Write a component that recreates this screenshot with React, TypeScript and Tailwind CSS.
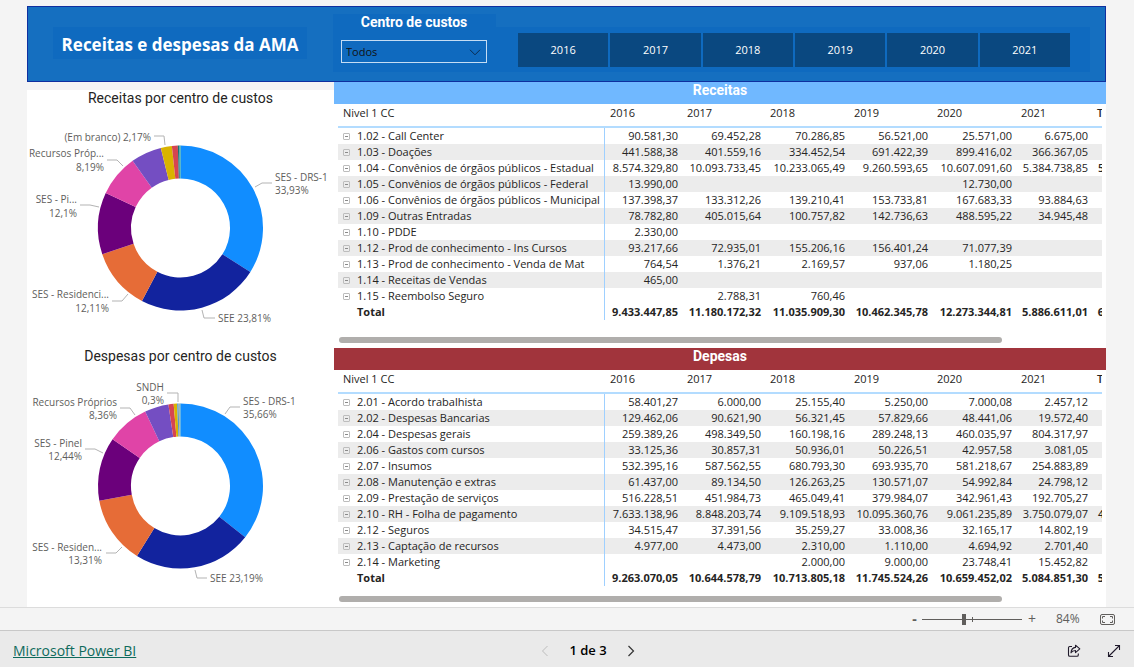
import { useState } from "react";

type Row = { name: string; values: (number | null)[] };

type Slice = { value: number; color: string };

type Callout = {
	lines: { text: string; x: number; y: number }[];
	anchor: "start" | "end";
	leader: string;
};

const years = ["2016", "2017", "2018", "2019", "2020", "2021"];

const receitas: Row[] = [
	{ name: "1.02 - Call Center", values: [90581.3, 69452.28, 70286.85, 56521, 25571, 6675] },
	{ name: "1.03 - Doações", values: [441588.38, 401559.16, 334452.54, 691422.39, 899416.02, 366367.05] },
	{
		name: "1.04 - Convênios de órgãos públicos - Estadual",
		values: [8574329.8, 10093733.45, 10233065.49, 9260593.65, 10607091.6, 5384738.85],
	},
	{
		name: "1.05 - Convênios de órgãos públicos - Federal",
		values: [13990, null, null, null, 12730, null],
	},
	{
		name: "1.06 - Convênios de órgãos públicos - Municipal",
		values: [137398.37, 133312.26, 139210.41, 153733.81, 167683.33, 93884.63],
	},
	{ name: "1.09 - Outras Entradas", values: [78782.8, 405015.64, 100757.82, 142736.63, 488595.22, 34945.48] },
	{ name: "1.10 - PDDE", values: [2330, null, null, null, null, null] },
	{
		name: "1.12 - Prod de conhecimento - Ins Cursos",
		values: [93217.66, 72935.01, 155206.16, 156401.24, 71077.39, null],
	},
	{
		name: "1.13 - Prod de conhecimento - Venda de Mat",
		values: [764.54, 1376.21, 2169.57, 937.06, 1180.25, null],
	},
	{ name: "1.14 - Receitas de Vendas", values: [465, null, null, null, null, null] },
	{ name: "1.15 - Reembolso Seguro", values: [null, 2788.31, 760.46, null, null, null] },
];

const receitasTotal = [9433447.85, 11180172.32, 11035909.3, 10462345.78, 12273344.81, 5886611.01];

const despesas: Row[] = [
	{ name: "2.01 - Acordo trabalhista", values: [58401.27, 6000, 25155.4, 5250, 7000.08, 2457.12] },
	{ name: "2.02 - Despesas Bancarias", values: [129462.06, 90621.9, 56321.45, 57829.66, 48441.06, 19572.4] },
	{ name: "2.04 - Despesas gerais", values: [259389.26, 498349.5, 160198.16, 289248.13, 460035.97, 804317.97] },
	{ name: "2.06 - Gastos com cursos", values: [33125.36, 30857.31, 50936.01, 50226.51, 42957.58, 3081.05] },
	{ name: "2.07 - Insumos", values: [532395.16, 587562.55, 680793.3, 693935.7, 581218.67, 254883.89] },
	{ name: "2.08 - Manutenção e extras", values: [61437, 89134.5, 126263.25, 130571.07, 54992.84, 24798.12] },
	{
		name: "2.09 - Prestação de serviços",
		values: [516228.51, 451984.73, 465049.41, 379984.07, 342961.43, 192705.27],
	},
	{
		name: "2.10 - RH - Folha de pagamento",
		values: [7633138.96, 8848203.74, 9109518.93, 10095360.76, 9061235.89, 3750079.07],
	},
	{ name: "2.12 - Seguros", values: [34515.47, 37391.56, 35259.27, 33008.36, 32165.17, 14802.19] },
	{ name: "2.13 - Captação de recursos", values: [4977, 4473, 2310, 1110, 4694.92, 2701.4] },
	{ name: "2.14 - Marketing", values: [null, null, 2000, 9000, 23748.41, 15452.82] },
];

const despesasTotal = [9263070.05, 10644578.79, 10713805.18, 11745524.26, 10659452.02, 5084851.3];

const receitasSlices: Slice[] = [
	{ value: 33.93, color: "#118dff" },
	{ value: 23.81, color: "#12239e" },
	{ value: 12.11, color: "#e66c37" },
	{ value: 12.1, color: "#6b007b" },
	{ value: 8.19, color: "#e044a7" },
	{ value: 6.02, color: "#744ec2" },
	{ value: 2.17, color: "#d9b300" },
	{ value: 1.15, color: "#d64550" },
	{ value: 0.3, color: "#197278" },
	{ value: 0.22, color: "#2aa69c" },
];

const receitasCallouts: Callout[] = [
	{
		anchor: "start",
		lines: [
			{ text: "SES - DRS-1", x: 248, y: 74 },
			{ text: "33,93%", x: 248, y: 87 },
		],
		leader: "M228 80L235 76H245",
	},
	{ anchor: "start", lines: [{ text: "SEE 23,81%", x: 191, y: 215 }], leader: "M175 203L177 211H188" },
	{
		anchor: "end",
		lines: [
			{ text: "SES - Residenci...", x: 82, y: 191 },
			{ text: "12,11%", x: 82, y: 205 },
		],
		leader: "M85 194H95L101 187",
	},
	{
		anchor: "end",
		lines: [
			{ text: "SES - Pi...", x: 50, y: 96 },
			{ text: "12,1%", x: 50, y: 110 },
		],
		leader: "M53 98H63L72 100",
	},
	{
		anchor: "end",
		lines: [
			{ text: "Recursos Próp...", x: 77, y: 50 },
			{ text: "8,19%", x: 77, y: 64 },
		],
		leader: "M80 53H90L96 59",
	},
	{ anchor: "end", lines: [{ text: "(Em branco) 2,17%", x: 124, y: 34 }], leader: "M127 29H137L138 38" },
];

const despesasSlices: Slice[] = [
	{ value: 35.66, color: "#118dff" },
	{ value: 23.19, color: "#12239e" },
	{ value: 13.31, color: "#e66c37" },
	{ value: 12.44, color: "#6b007b" },
	{ value: 8.36, color: "#e044a7" },
	{ value: 4.7, color: "#744ec2" },
	{ value: 1.02, color: "#d64550" },
	{ value: 0.66, color: "#d9b300" },
	{ value: 0.3, color: "#4f9bd6" },
	{ value: 0.16, color: "#d3a56d" },
	{ value: 0.2, color: "#3d9fd0" },
];

const despesasCallouts: Callout[] = [
	{
		anchor: "start",
		lines: [
			{ text: "SES - DRS-1", x: 216, y: 40 },
			{ text: "35,66%", x: 216, y: 53 },
		],
		leader: "M198 49L203 42H213",
	},
	{ anchor: "start", lines: [{ text: "SEE 23,19%", x: 183, y: 217 }], leader: "M168 205L170 213H180" },
	{
		anchor: "end",
		lines: [
			{ text: "SES - Residen...", x: 75, y: 186 },
			{ text: "13,31%", x: 75, y: 199 },
		],
		leader: "M79 188H89L95 182",
	},
	{
		anchor: "end",
		lines: [
			{ text: "SES - Pinel", x: 55, y: 82 },
			{ text: "12,44%", x: 55, y: 95 },
		],
		leader: "M58 84H68L76 88",
	},
	{
		anchor: "end",
		lines: [
			{ text: "Recursos Próprios", x: 90, y: 41 },
			{ text: "8,36%", x: 90, y: 54 },
		],
		leader: "M93 43H103L108 50",
	},
	{
		anchor: "end",
		lines: [
			{ text: "SNDH", x: 137, y: 26 },
			{ text: "0,3%", x: 137, y: 39 },
		],
		leader: "M140 28H151L151 37",
	},
];

const formatter = new Intl.NumberFormat("pt-BR", {
	minimumFractionDigits: 2,
	maximumFractionDigits: 2,
});

function format(value: number | null) {
	return value === null ? "" : formatter.format(value);
}

function sum(values: (number | null)[]) {
	return values.reduce<number>((acc, v) => acc + (v ?? 0), 0);
}

const CX = 153.5;
const CY = 121;
const OUTER = 82.5;
const INNER = 49.5;

function point(radius: number, share: number) {
	const angle = (share / 100) * 2 * Math.PI;
	return `${(CX + radius * Math.sin(angle)).toFixed(2)} ${(CY - radius * Math.cos(angle)).toFixed(2)}`;
}

function arc(from: number, to: number) {
	const large = to - from > 50 ? 1 : 0;
	return [
		`M${point(OUTER, from)}`,
		`A${OUTER} ${OUTER} 0 ${large} 1 ${point(OUTER, to)}`,
		`L${point(INNER, to)}`,
		`A${INNER} ${INNER} 0 ${large} 0 ${point(INNER, from)}Z`,
	].join("");
}

function DonutChart({ title, slices, callouts }: { title: string; slices: Slice[]; callouts: Callout[] }) {
	let start = 0;
	return (
		<section>
			<h2 className="text-center font-[Roboto,sans-serif] text-sm leading-[17px] text-[#252423]">{title}</h2>
			<svg viewBox="0 0 307 241" className="block w-full" role="img" aria-label={title}>
				{slices.map((s) => {
					const from = start;
					start += s.value;
					return <path key={s.color} d={arc(from, start)} fill={s.color} />;
				})}
				{callouts.map((c) => (
					<g key={c.leader}>
						<path d={c.leader} fill="none" stroke="#b3b3b3" />
						{c.lines.map((l) => (
							<text key={l.text} x={l.x} y={l.y} textAnchor={c.anchor} fontSize="10" fill="#605e5c">
								{l.text}
							</text>
						))}
					</g>
				))}
			</svg>
		</section>
	);
}

function CollapseIcon() {
	return (
		<svg viewBox="0 0 7 7" className="size-[7px]" fill="none" stroke="#bdbdbd" aria-hidden="true">
			<rect x="0.5" y="0.5" width="6" height="6" rx="0.5" />
			<path d="M2 3.5H5" stroke="#8a8a8a" />
		</svg>
	);
}

function Matrix({ rows, total }: { rows: Row[]; total: number[] }) {
	return (
		<div className="mx-1 overflow-x-auto [scrollbar-width:none]">
			<table className="w-[836px] table-fixed border-separate border-spacing-0 whitespace-nowrap text-[11px] leading-4 text-[#252423]">
				<colgroup>
					<col className="w-[267px]" />
					<col className="w-[77px]" />
					<col className="w-[83px]" />
					<col className="w-[84px]" />
					<col className="w-[83px]" />
					<col className="w-[84px]" />
					<col className="w-[76px]" />
					<col className="w-[82px]" />
				</colgroup>
				<thead>
					<tr className="h-6 text-left align-top">
						<th className="border-b-2 border-[#b3dcff] px-[5px] pt-px pb-[5px] font-normal">Nivel 1 CC</th>
						{years.map((y) => (
							<th key={y} className="border-b-2 border-[#b3dcff] px-[5px] pt-px pb-[5px] font-normal">
								{y}
							</th>
						))}
						<th className="border-b-2 border-[#b3dcff] px-[5px] pt-px pb-[5px] font-semibold">Total</th>
					</tr>
				</thead>
				<tbody>
					{rows.map((row) => (
						<tr key={row.name} className="h-4 text-right even:bg-[#ececec]">
							<th className="border-r border-[#9fd0ff] p-0 pl-[5px] text-left font-normal">
								<span className="flex items-center gap-[7px]">
									<button type="button" aria-label={`Recolher ${row.name}`}>
										<CollapseIcon />
									</button>
									{row.name}
								</span>
							</th>
							{row.values.map((v, i) => (
								<td key={years[i]} className="px-1 py-0">
									{format(v)}
								</td>
							))}
							<td className="px-1 py-0 font-semibold">{format(sum(row.values))}</td>
						</tr>
					))}
				</tbody>
				<tfoot>
					<tr className="h-4 text-right font-bold">
						<th className="border-r border-[#9fd0ff] p-0 pl-[19px] text-left">Total</th>
						{total.map((v, i) => (
							<td key={years[i]} className="px-1 py-0">
								{format(v)}
							</td>
						))}
						<td className="px-1 py-0">{format(sum(total))}</td>
					</tr>
				</tfoot>
			</table>
		</div>
	);
}

function ScrollThumb() {
	return (
		<div className="mx-[5px]">
			<div className="h-1.5 w-[87%] rounded-full bg-[#b0aeac]" />
		</div>
	);
}

function Header() {
	return (
		<header className="flex h-[76px] items-start border border-[#0f2f9f] bg-[#156fc0]">
			<h1 className="mt-5 ml-[25px] w-[254px] shrink-0 bg-[#0f6abf] pt-1 text-center text-[17px] leading-7 font-bold whitespace-nowrap text-white">
				Receitas e despesas da AMA
			</h1>
			<div className="mt-[7px] ml-[26px] h-[58px] w-[163px] shrink-0 bg-[#0f6abf] pr-[9px] pl-2">
				<label
					htmlFor="centro"
					className="block text-center font-[Roboto,sans-serif] text-sm leading-[17px] font-bold text-white"
				>
					Centro de custos
				</label>
				<div className="relative mt-[9px]">
					<select
						id="centro"
						className="block h-[23px] w-full appearance-none border border-[#c5ddf4] bg-transparent pt-0.5 pl-1 text-[11px] text-[#111]"
					>
						<option>Todos</option>
					</select>
					<svg
						viewBox="0 0 12 7"
						className="pointer-events-none absolute top-[9px] right-1.5 h-[7px] w-3"
						fill="none"
						stroke="#0b2c50"
					>
						<path d="M1 0.8L6 5.8L11 0.8" />
					</svg>
				</div>
			</div>
			<div className="mt-5 mr-[15px] flex h-[45px] flex-1 gap-0.5 bg-[#0f6abf] pt-1.5 pr-5 pb-[5px] pl-[22px]">
				{years.map((y) => (
					<button key={y} type="button" className="flex-1 bg-[#0a4880] text-[11px] font-medium text-white">
						{y}
					</button>
				))}
			</div>
		</header>
	);
}

function ZoomBar() {
	const [zoom, setZoom] = useState(84);
	return (
		<div className="flex h-[23px] items-center justify-end border-t border-[#dcdcdc] bg-[#f4f4f4] pr-[19px] text-[#605e5c]">
			<button type="button" aria-label="Reduzir" className="w-[5px] text-sm leading-none font-bold">
				-
			</button>
			<div className="relative ml-[5px] flex w-[100px] items-center">
				<input
					type="range"
					aria-label="Zoom"
					min={0}
					max={200}
					value={zoom}
					onChange={(e) => setZoom(Number(e.target.value))}
					className="h-3 w-full appearance-none bg-[linear-gradient(#605e5c,#605e5c)] bg-[length:100%_1px] bg-center bg-no-repeat [&::-webkit-slider-thumb]:h-[11px] [&::-webkit-slider-thumb]:w-1 [&::-webkit-slider-thumb]:appearance-none [&::-webkit-slider-thumb]:bg-[#605e5c]"
				/>
				<span className="absolute left-1/2 h-[5px] w-px bg-[#605e5c]" />
			</div>
			<button type="button" aria-label="Ampliar" className="ml-1.5 w-2 text-sm leading-none">
				+
			</button>
			<span className="ml-5 w-6 text-xs">{zoom}%</span>
			<button type="button" aria-label="Ajustar à página" className="ml-5">
				<svg viewBox="0 0 15 11" className="h-[11px] w-[15px]" fill="none" stroke="#605e5c">
					<rect x="0.5" y="0.5" width="14" height="10" rx="1.5" />
					<path d="M5 2.5H2.5V4.5M10 2.5H12.5V4.5M5 8.5H2.5V6.5M10 8.5H12.5V6.5" />
				</svg>
			</button>
		</div>
	);
}

function Footer() {
	return (
		<footer className="grid flex-1 grid-cols-3 items-center border-t border-[#c8c8c8] bg-[#eaeaea] pt-1 pr-[13px] pl-[13px]">
			<a href="#" className="text-sm text-[#0e6a5c] underline">
				Microsoft Power BI
			</a>
			<nav className="flex items-center justify-center gap-5 pl-[42px] text-[13px] font-semibold text-black">
				<button type="button" aria-label="Página anterior">
					<svg viewBox="0 0 8 12" className="h-3 w-2" fill="none" stroke="#bdbdbd">
						<path d="M6.5 1L1.5 6L6.5 11" />
					</svg>
				</button>
				<span>1 de 3</span>
				<button type="button" aria-label="Próxima página">
					<svg viewBox="0 0 8 12" className="h-3 w-2" fill="none" stroke="#333" strokeWidth="1.2">
						<path d="M1.5 1L6.5 6L1.5 11" />
					</svg>
				</button>
			</nav>
			<div className="flex items-center justify-end gap-[26px]">
				<button type="button" aria-label="Compartilhar">
					<svg viewBox="0 0 14 14" className="size-3.5" fill="none" stroke="#201a2b" strokeWidth="1.1">
						<path d="M5 2.5H2.8A1.3 1.3 0 0 0 1.5 3.8V11A1.3 1.3 0 0 0 2.8 12.3H10A1.3 1.3 0 0 0 11.3 11V9.5" />
						<path
							d="M8.5 1.2L12.8 4.9L8.5 8.6V6.5C6.4 6.5 5 7.2 4 8.8C4.2 5.8 5.7 3.7 8.5 3.4Z"
							strokeLinejoin="round"
						/>
					</svg>
				</button>
				<button type="button" aria-label="Tela cheia">
					<svg viewBox="0 0 14 14" className="size-3.5" fill="none" stroke="#201a2b" strokeWidth="1.1">
						<path d="M1.5 12.5L12.5 1.5M8 1.5H12.5V6M1.5 8V12.5H6" />
					</svg>
				</button>
			</div>
		</footer>
	);
}

export default function App() {
	return (
		<div className="flex min-h-screen flex-col bg-[#f4f4f4] font-['Open_Sans','Noto_Sans',sans-serif]">
			<main className="mr-7 ml-[27px] pt-1.5">
				<Header />
				<div className="flex">
					<div className="mt-2 w-[307px] shrink-0 bg-white">
						<DonutChart
							title="Receitas por centro de custos"
							slices={receitasSlices}
							callouts={receitasCallouts}
						/>
						<DonutChart
							title="Despesas por centro de custos"
							slices={despesasSlices}
							callouts={despesasCallouts}
						/>
					</div>
					<div className="min-w-0 flex-1 bg-white">
						<section className="pb-[5px]">
							<h2 className="bg-[#70b8ff] pb-[5px] text-center font-[Roboto,sans-serif] text-sm leading-[17px] font-bold text-white">
								Receitas
							</h2>
							<Matrix rows={receitas} total={receitasTotal} />
							<div className="pt-[17px]">
								<ScrollThumb />
							</div>
						</section>
						<section className="pb-[5px]">
							<h2 className="bg-[#a1343c] pb-[5px] text-center font-[Roboto,sans-serif] text-sm leading-[17px] font-bold text-white">
								Depesas
							</h2>
							<Matrix rows={despesas} total={despesasTotal} />
							<div className="pt-2.5">
								<ScrollThumb />
							</div>
						</section>
					</div>
				</div>
			</main>
			<ZoomBar />
			<Footer />
		</div>
	);
}
